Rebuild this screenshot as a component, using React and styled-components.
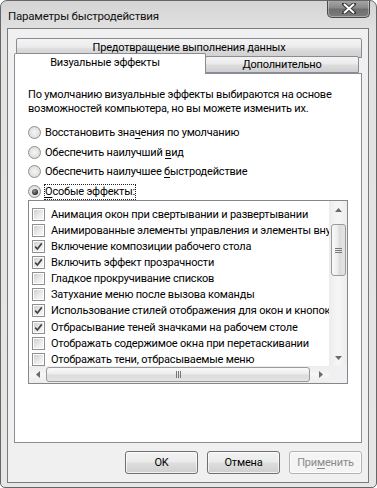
import React from "react";
import styled, { createGlobalStyle } from "styled-components";

const GlobalStyle = createGlobalStyle`
  html, body {
    margin: 0;
    padding: 0;
    background: #fff;
  }
  body {
    font-family: Roboto, "Liberation Sans", sans-serif;
    font-size: 11px;
    letter-spacing: -0.2px;
    color: #000;
  }
  * {
    box-sizing: border-box;
  }
`;

const Window = styled.div`
  width: 377px;
  height: 488px;
  border: 1px solid #666;
  border-radius: 7px 7px 5px 5px;
  background: linear-gradient(#d4d4d4, #e2e2e2 30px, #e6e6e6);
  padding: 0 7px 4px 6px;
  display: flex;
  flex-direction: column;
  overflow: hidden;
`;

const TitleBar = styled.div`
  height: 27px;
  display: flex;
  justify-content: space-between;
  align-items: flex-start;
`;

const Title = styled.div`
  margin: 7px 0 0 1px;
  font-size: 11.5px;
  line-height: 16px;
  color: #111;
`;

const CloseButton = styled.div`
  width: 43px;
  height: 18px;
  margin: -1px -1px 0 0;
  border: 1px solid #4a4a4a;
  border-top: none;
  border-radius: 0 0 5px 5px;
  background: linear-gradient(#a8a8a8, #8a8a8a 45%, #6e6e6e 55%, #7c7c7c);
  box-shadow: inset 0 0 0 1px rgba(255, 255, 255, 0.35);
  display: flex;
  align-items: center;
  justify-content: center;
`;

const Client = styled.div`
  flex: 1;
  border: 1px solid #7a7a7a;
  background: #f0f0f0;
  padding: 9px 6px 8px;
  display: flex;
  flex-direction: column;
`;

const TabRow = styled.div`
  height: ${(p) => p.$h}px;
  display: flex;
  align-items: ${(p) => (p.$bottom ? "flex-end" : "flex-start")};
  position: relative;
  z-index: ${(p) => (p.$bottom ? 2 : 1)};
`;

const Tab = styled.div`
  height: ${(p) => p.$h}px;
  width: ${(p) => p.$w}px;
  margin-left: ${(p) => p.$ml || 0}px;
  margin-bottom: ${(p) => (p.$active ? -1 : 0)}px;
  border: 1px solid #898c95;
  border-bottom: ${(p) => (p.$active ? "none" : "1px solid #898c95")};
  border-radius: 2px 2px 0 0;
  background: ${(p) =>
    p.$active ? "#fff" : "linear-gradient(#f4f4f4, #ebebeb 45%, #dcdcdc 55%, #cfcfcf)"};
  text-align: center;
  line-height: ${(p) => p.$lh}px;
  padding-top: ${(p) => p.$pt || 0}px;
  padding-right: ${(p) => p.$pr || 0}px;
  white-space: nowrap;
`;

const Panel = styled.div`
  flex: 1;
  background: #fff;
  border: 1px solid #898c95;
  padding: 14px 12px 0 13px;
  display: flex;
  flex-direction: column;
  position: relative;
  z-index: 1;
`;

const Intro = styled.p`
  margin: 0;
  line-height: 13.5px;
  white-space: nowrap;
`;

const Options = styled.div`
  margin-top: 8px;
  display: flex;
  flex-direction: column;
`;

const OptionRow = styled.div`
  height: 19.6px;
  display: flex;
  align-items: center;
  gap: 4px;
  white-space: nowrap;
`;

const RadioCircle = styled.span`
  width: 13px;
  height: 13px;
  border-radius: 50%;
  border: 1px solid #8f8f8f;
  background: radial-gradient(circle at 50% 50%, #f6f6f6 0, #e2e2e2 60%, #cfcfcf 100%);
  display: flex;
  align-items: center;
  justify-content: center;
  flex: none;

  &::after {
    content: "";
    display: ${(p) => (p.$on ? "block" : "none")};
    width: 6px;
    height: 6px;
    border-radius: 50%;
    background: radial-gradient(circle at 40% 35%, #9a9a9a, #2a2a2a 70%, #111);
  }
`;

const Focus = styled.span`
  outline: 1px dotted #222;
  outline-offset: 0;
  line-height: 14px;
`;

const Key = styled.span`
  text-decoration: underline;
  text-underline-offset: 2px;
`;

const ListBox = styled.div`
  margin-top: -1px;
  width: 320px;
  height: 184px;
  border: 1px solid #828790;
  display: grid;
  grid-template-columns: 1fr 18px;
  grid-template-rows: 1fr 17px;
  overflow: hidden;
`;

const Items = styled.div`
  padding: 5px 0 0 3px;
  overflow: hidden;
`;

const Item = styled.div`
  height: 16.1px;
  display: flex;
  align-items: center;
  gap: 6px;
  white-space: nowrap;
`;

const CheckBox = styled.span`
  width: 13px;
  height: 13px;
  flex: none;
  border: 1px solid #8f8f8f;
  background: #fff;
  padding: 1px;
  display: flex;

  & > span {
    flex: 1;
    background: linear-gradient(135deg, #cfcfcf, #ececec 60%, #f6f6f6);
    display: flex;
    align-items: center;
    justify-content: center;
  }
`;

const VScroll = styled.div`
  background: linear-gradient(90deg, #ececec, #f6f6f6 50%, #ececec);
  display: flex;
  flex-direction: column;
  align-items: center;
  padding: 0 1px 0 2px;
`;

const HScroll = styled.div`
  background: linear-gradient(#ececec, #f6f6f6 50%, #ececec);
  display: flex;
  align-items: center;
  padding: 1px 0 1px 0;
`;

const Corner = styled.div`
  background: #f0f0f0;
`;

const Arrow = styled.div`
  width: ${(p) => (p.$h ? 17 : 15)}px;
  height: ${(p) => (p.$h ? 15 : 17)}px;
  display: flex;
  align-items: center;
  justify-content: center;
  flex: none;
`;

const Thumb = styled.div`
  border: 1px solid #9a9a9a;
  border-radius: 3px;
  display: flex;
  align-items: center;
  justify-content: center;
  ${(p) =>
    p.$h
      ? `
    flex: 1;
    height: 15px;
    margin-right: 2px;
    background: linear-gradient(#fafafa, #ececec 45%, #dcdcdc 55%, #e4e4e4);
  `
      : `
    width: 15px;
    height: 52px;
    margin-top: 6px;
    margin-bottom: auto;
    background: linear-gradient(90deg, #fafafa, #ececec 45%, #dcdcdc 55%, #e4e4e4);
  `}
`;

const Buttons = styled.div`
  margin-top: 8px;
  display: flex;
  justify-content: flex-end;
  gap: 9px;
`;

const Button = styled.button`
  width: 73px;
  height: 23px;
  padding: 0;
  font-family: inherit;
  font-size: 11px;
  letter-spacing: -0.2px;
  border-radius: 3px;
  border: 1px solid ${(p) => (p.disabled ? "#b3b3b3" : "#707070")};
  color: ${(p) => (p.disabled ? "#8a8a8a" : "#000")};
  background: ${(p) =>
    p.disabled
      ? "#f4f4f4"
      : "linear-gradient(#f2f2f2, #ebebeb 45%, #dddddd 55%, #cfcfcf)"};
  box-shadow: inset 0 0 0 1px rgba(255, 255, 255, 0.7);
`;

const Triangle = ({ dir }) => {
  const pts = {
    up: "0,4 3.5,0 7,4",
    down: "0,0 7,0 3.5,4",
    left: "4,0 4,7 0,3.5",
    right: "0,0 0,7 4,3.5",
  }[dir];
  const vertical = dir === "up" || dir === "down";
  return (
    <svg width={vertical ? 7 : 4} height={vertical ? 4 : 7}>
      <polygon points={pts} fill="#6a6a6a" />
    </svg>
  );
};

const Grip = ({ h }) => (
  <svg width="7" height="7">
    {[1, 3, 5].map((v) =>
      h ? (
        <line key={v} x1={v + 0.5} y1="0" x2={v + 0.5} y2="7" stroke="#777" />
      ) : (
        <line key={v} x1="0" y1={v + 0.5} x2="7" y2={v + 0.5} stroke="#777" />
      )
    )}
  </svg>
);

const Check = () => (
  <svg width="9" height="9" viewBox="0 0 9 9">
    <path d="M1.2 4.6 L3.4 7 L7.8 1.4" fill="none" stroke="#444" strokeWidth="1.7" />
  </svg>
);

const effects = [
  ["Анимация окон при свертывании и развертывании", false],
  ["Анимированные элементы управления и элементы внутри окна", false],
  ["Включение композиции рабочего стола", true],
  ["Включить эффект прозрачности", true],
  ["Гладкое прокручивание списков", false],
  ["Затухание меню после вызова команды", false],
  ["Использование стилей отображения для окон и кнопок", true],
  ["Отбрасывание теней значками на рабочем столе", true],
  ["Отображать содержимое окна при перетаскивании", false],
  ["Отображать тени, отбрасываемые меню", false],
];

export default function App() {
  return (
    <>
      <GlobalStyle />
      <Window>
        <TitleBar>
          <Title>Параметры быстродействия</Title>
          <CloseButton>
            <svg width="14" height="11" viewBox="0 0 14 11">
              <path
                d="M2 1 L12 10 M12 1 L2 10"
                stroke="#3a3a3a"
                strokeWidth="4"
                strokeLinecap="square"
              />
              <path d="M2 1 L12 10 M12 1 L2 10" stroke="#fff" strokeWidth="2" />
            </svg>
          </CloseButton>
        </TitleBar>
        <Client>
          <TabRow $h={15}>
            <Tab $h={20} $w={346} $ml={2} $lh={16} $pt={1}>
              Предотвращение выполнения данных
            </Tab>
          </TabRow>
          <TabRow $h={20} $bottom>
            <Tab $active $h={21} $w={192} $lh={18} $pr={10}>
              Визуальные эффекты
            </Tab>
            <Tab $h={17} $w={154} $ml={-1} $lh={15}>
              Дополнительно
            </Tab>
          </TabRow>
          <Panel>
            <Intro>
              По умолчанию визуальные эффекты выбираются на основе
              <br />
              возможностей компьютера, но вы можете изменить их.
            </Intro>
            <Options>
              <OptionRow>
                <RadioCircle />
                <span>
                  Восстановить зна<Key>ч</Key>ения по умолчанию
                </span>
              </OptionRow>
              <OptionRow>
                <RadioCircle />
                <span>
                  Обеспечить наилучший <Key>в</Key>ид
                </span>
              </OptionRow>
              <OptionRow>
                <RadioCircle />
                <span>
                  Обеспечить наилучшее <Key>б</Key>ыстродействие
                </span>
              </OptionRow>
              <OptionRow>
                <RadioCircle $on />
                <Focus>
                  <Key>О</Key>собые эффекты:
                </Focus>
              </OptionRow>
            </Options>
            <ListBox>
              <Items>
                {effects.map(([label, on]) => (
                  <Item key={label}>
                    <CheckBox>
                      <span>{on && <Check />}</span>
                    </CheckBox>
                    <span>{label}</span>
                  </Item>
                ))}
              </Items>
              <VScroll>
                <Arrow>
                  <Triangle dir="up" />
                </Arrow>
                <Thumb>
                  <Grip />
                </Thumb>
                <Arrow>
                  <Triangle dir="down" />
                </Arrow>
              </VScroll>
              <HScroll>
                <Arrow $h>
                  <Triangle dir="left" />
                </Arrow>
                <Thumb $h>
                  <Grip h />
                </Thumb>
                <Arrow $h>
                  <Triangle dir="right" />
                </Arrow>
              </HScroll>
              <Corner />
            </ListBox>
          </Panel>
          <Buttons>
            <Button>OK</Button>
            <Button>Отмена</Button>
            <Button disabled>
              При<Key>м</Key>енить
            </Button>
          </Buttons>
        </Client>
      </Window>
    </>
  );
}
